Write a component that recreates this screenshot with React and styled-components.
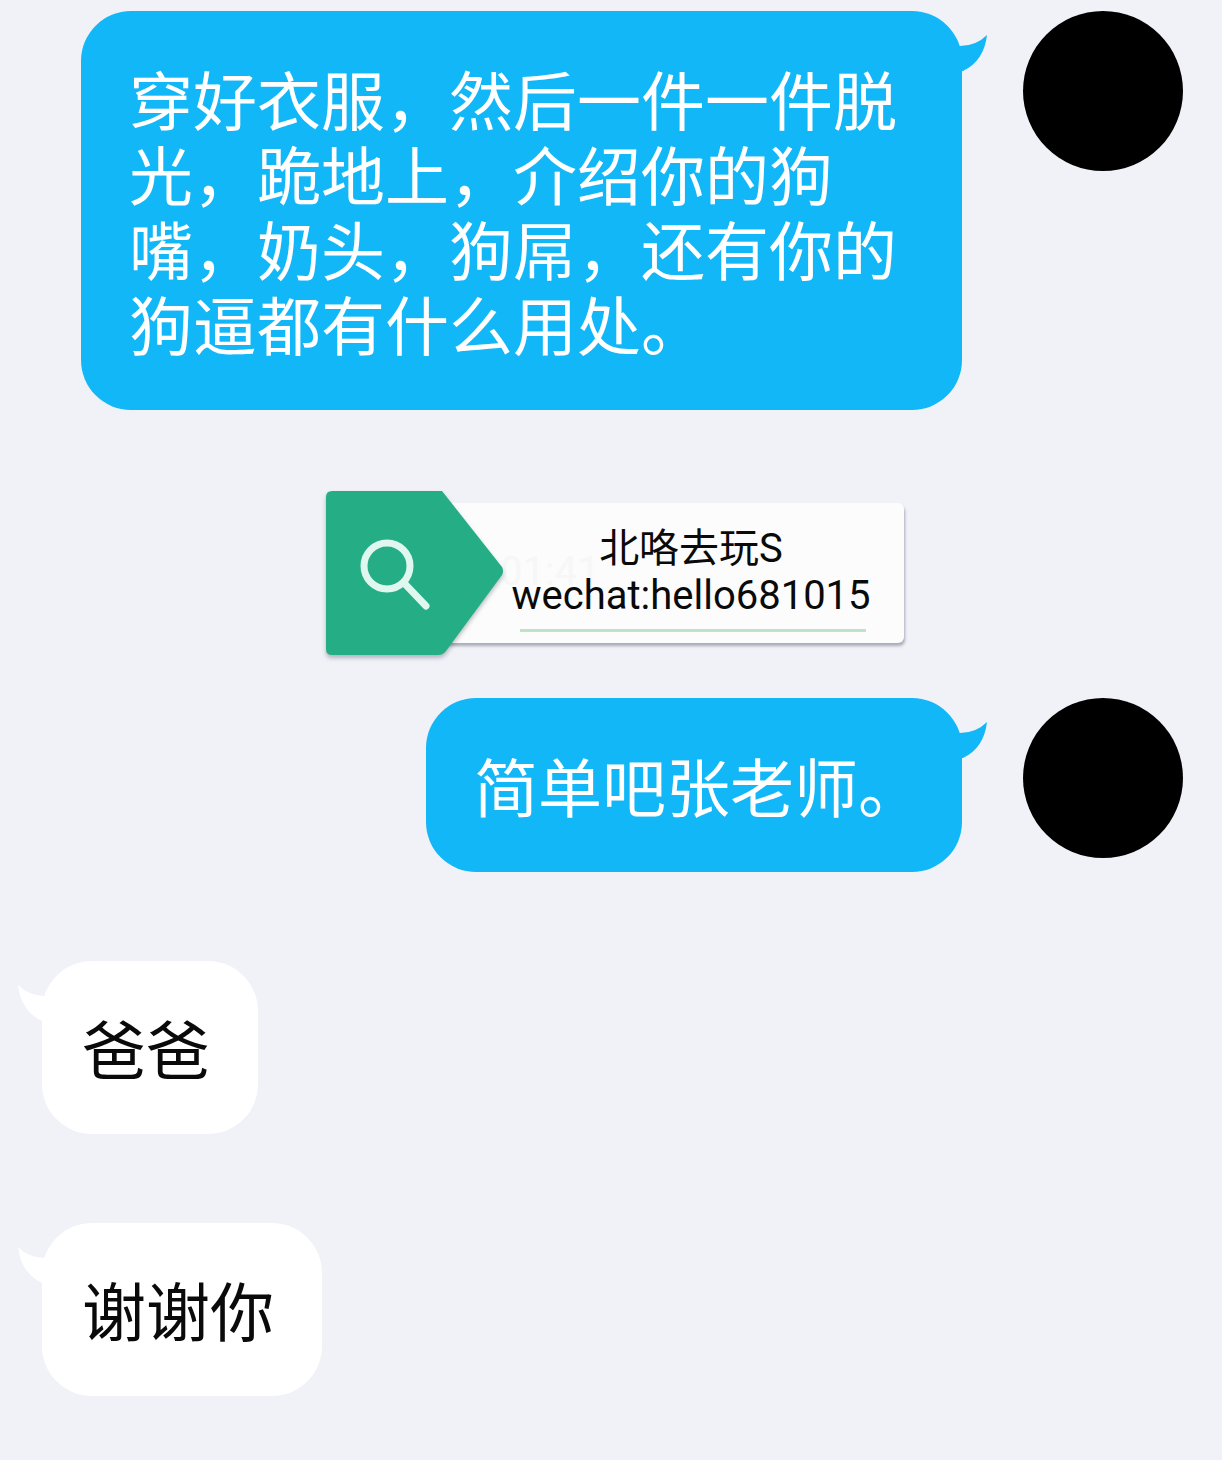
import React from 'react'
import styled, { createGlobalStyle } from 'styled-components'

const GlobalStyle = createGlobalStyle`
    html, body {
        margin: 0;
        background: #f1f2f8;
    }
`

const Tail = ({ left }) => (
    <TailSvg $left={left} width="40" height="45" viewBox="0 0 40 45">
        <path d="M0 16 L7 16 Q25 17 37 5 Q34 31 13 41 L0 41 Z" fill={left ? '#ffffff' : '#12b7f8'} />
    </TailSvg>
)

const SearchTag = () => (
    <Tag>
        <svg width="178" height="164" viewBox="0 0 178 164">
            <path d="M6 0 H116 L176 76 Q178 80 176 84 L120 160 Q117 164 112 164 H6 Q0 164 0 158 V6 Q0 0 6 0 Z" fill="#25ae85" />
            <circle cx="61" cy="75" r="23" fill="none" stroke="#e0f7ef" strokeWidth="7" />
            <path d="M79 93 L100 115" stroke="#e0f7ef" strokeWidth="7" strokeLinecap="round" />
        </svg>
    </Tag>
)

const App = () => {
    return (
        <Page>
            <GlobalStyle />
            <Row>
                <Bubble>
                    <Tail />
                    穿好衣服，然后一件一件脱光，跪地上，介绍你的狗嘴，奶头，狗屌，还有你的狗逼都有什么用处。
                </Bubble>
                <Avatar />
            </Row>
            <Notice>
                <SearchTag />
                <NoticeCard>
                    <Ghost>01:41</Ghost>
                    <NoticeLine>北咯去玩S</NoticeLine>
                    <NoticeLine>wechat:hello681015</NoticeLine>
                    <NoticeRule />
                </NoticeCard>
            </Notice>
            <Row>
                <Bubble>
                    <Tail />
                    简单吧张老师。
                </Bubble>
                <Avatar />
            </Row>
            <LeftRow>
                <Bubble $left>
                    <Tail left />
                    爸爸
                </Bubble>
            </LeftRow>
            <LeftRow>
                <Bubble $left>
                    <Tail left />
                    谢谢你
                </Bubble>
            </LeftRow>
        </Page>
    )
}

export default App

const Page = styled.div`
    width: 1222px;
    height: 1460px;
    box-sizing: border-box;
    padding-top: 11px;
    background: #f1f2f8;
    overflow: hidden;
    font-family: "Noto Sans CJK SC", sans-serif;
`

const Row = styled.div`
    display: flex;
    justify-content: flex-end;
    align-items: flex-start;
    gap: 61px;
    padding-right: 39px;
`

const LeftRow = styled.div`
    display: flex;
    padding-left: 42px;
    margin-top: 89px;
`

const Bubble = styled.div`
    position: relative;
    box-sizing: border-box;
    max-width: 881px;
    padding: ${props => props.$left ? '48px 48px 50px 40px' : '49px 40px 50px 48px'};
    border-radius: 50px;
    background: ${props => props.$left ? '#ffffff' : '#12b7f8'};
    color: ${props => props.$left ? '#0a0a0a' : '#ffffff'};
    font-size: 64px;
    line-height: 75px;
    font-weight: 400;
`

const TailSvg = styled.svg`
    position: absolute;
    top: 19px;
    ${props => props.$left ? 'left: -27px; transform: scaleX(-1);' : 'right: -28px;'}
`

const Avatar = styled.div`
    flex: none;
    width: 160px;
    height: 160px;
    border-radius: 50%;
    background: #000000;
`

const Notice = styled.div`
    display: flex;
    align-items: center;
    width: 578px;
    height: 164px;
    margin: 81px 0 43px 326px;
`

const Tag = styled.div`
    position: relative;
    z-index: 1;
    flex: none;
    width: 178px;
    height: 164px;
    margin-right: -64px;
    filter: drop-shadow(0 3px 2px rgba(60, 70, 90, 0.35));
    svg {
        display: block;
    }
`

const NoticeCard = styled.div`
    position: relative;
    flex: none;
    width: 464px;
    box-sizing: border-box;
    height: 140px;
    padding: 22px 38px 0 76px;
    display: flex;
    flex-direction: column;
    align-items: center;
    border-radius: 6px;
    background: #fbfcfb;
    box-shadow: 1px 3px 3px rgba(60, 70, 90, 0.4);
`

const Ghost = styled.div`
    position: absolute;
    left: 60px;
    top: 45px;
    font-family: Roboto, sans-serif;
    font-size: 40px;
    color: #f6f7f6;
`

const NoticeLine = styled.div`
    position: relative;
    height: 47px;
    line-height: 47px;
    white-space: nowrap;
    font-family: Roboto, "Noto Sans CJK SC", sans-serif;
    font-size: 40px;
    color: #0a0a0a;
`

const NoticeRule = styled.div`
    align-self: stretch;
    height: 3px;
    margin: 10px 0 0 4px;
    background: #bfe3c9;
`
